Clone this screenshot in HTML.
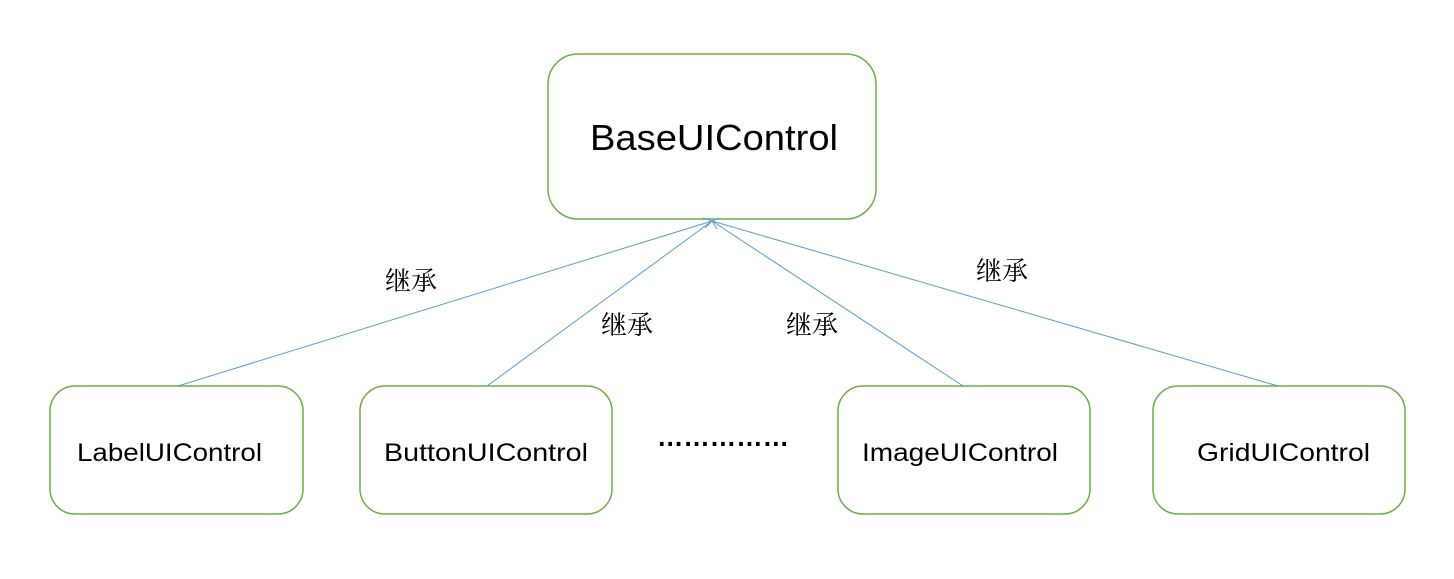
<!DOCTYPE html>
<html><head><meta charset="utf-8"><style>html,body{margin:0;padding:0;background:#fff;}</style></head>
<body>
<svg width="1454" height="574" viewBox="0 0 1454 574" xmlns="http://www.w3.org/2000/svg">
<g fill="#fff" stroke="#70ad47" stroke-width="1.5">
<rect x="548" y="54" width="328" height="165" rx="30"/>
<rect x="50" y="386" width="253" height="128" rx="25"/>
<rect x="360" y="386" width="252" height="128" rx="25"/>
<rect x="838" y="386" width="252" height="128" rx="25"/>
<rect x="1153" y="386" width="252" height="128" rx="25"/>
</g>
<g stroke="#5b9bd5" stroke-width="1" fill="none">
<line x1="178" y1="386" x2="712" y2="221"/>
<line x1="487" y1="386" x2="712" y2="221"/>
<line x1="963" y1="386" x2="712" y2="221"/>
<line x1="1278" y1="386" x2="712" y2="221"/>
<path d="M703 218 L712 221 L705 228 M719 218 L712 221 L717 229"/>
</g>
<g font-family="'Liberation Sans', sans-serif" fill="#000">
<text x="590" y="150" font-size="36" textLength="248" lengthAdjust="spacingAndGlyphs">BaseUIControl</text>
<text x="77" y="461" font-size="25" textLength="185" lengthAdjust="spacingAndGlyphs">LabelUIControl</text>
<text x="384" y="461" font-size="25" textLength="204" lengthAdjust="spacingAndGlyphs">ButtonUIControl</text>
<text x="862" y="461" font-size="25" textLength="196" lengthAdjust="spacingAndGlyphs">ImageUIControl</text>
<text x="1197" y="461" font-size="25" textLength="173" lengthAdjust="spacingAndGlyphs">GridUIControl</text>
<text x="657" y="446" font-size="28" font-weight="bold" textLength="132" lengthAdjust="spacingAndGlyphs">……………</text>
</g>
<g font-family="'Noto Serif CJK SC', serif" font-size="26" fill="#000">
<text x="385" y="290">继承</text>
<text x="601" y="334">继承</text>
<text x="786" y="334">继承</text>
<text x="976" y="280">继承</text>
</g>
</svg>
</body></html>
